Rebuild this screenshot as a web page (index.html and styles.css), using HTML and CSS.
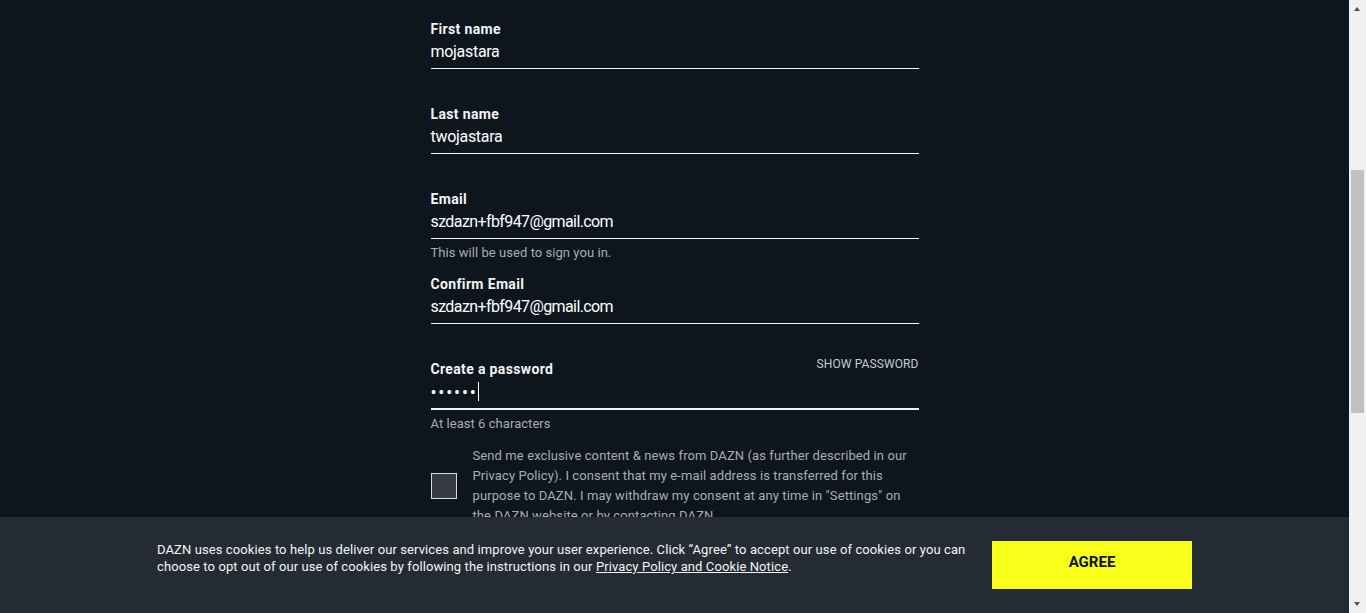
FILE: index.html
```html
<!DOCTYPE html>
<html lang="en">
<head>
<meta charset="utf-8">
<title>DAZN - Sign up</title>
<link rel="stylesheet" href="styles.css">
</head>
<body>
<div class="page">
  <form class="form">
    <div class="field">
      <label class="label">First name</label>
      <div class="input">mojastara</div>
    </div>
    <div class="field">
      <label class="label">Last name</label>
      <div class="input">twojastara</div>
    </div>
    <div class="field">
      <label class="label">Email</label>
      <div class="input input-mail">szdazn+fbf947@gmail.com</div>
      <div class="hint">This will be used to sign you in.</div>
    </div>
    <div class="field">
      <label class="label">Confirm Email</label>
      <div class="input input-mail">szdazn+fbf947@gmail.com</div>
    </div>
    <div class="field field-pw">
      <div class="label-row">
        <label class="label">Create a password</label>
        <span class="show">SHOW PASSWORD</span>
      </div>
      <div class="input input-focus"><span class="dots">••••••</span><span class="caret"></span></div>
      <div class="hint">At least 6 characters</div>
    </div>
    <div class="consent">
      <span class="checkbox"></span>
      <p class="consent-text">Send me exclusive content &amp; news from DAZN (as further described in our Privacy Policy). I consent that my e-mail address is transferred for this purpose to DAZN. I may withdraw my consent at any time in "Settings" on the DAZN website or by contacting DAZN.</p>
    </div>
  </form>
</div>

<div class="cookie">
  <div class="cookie-inner">
    <p class="cookie-text">DAZN uses cookies to help us deliver our services and improve your user experience. Click “Agree” to accept our use of cookies or you can choose to opt out of our use of cookies by following the instructions in our <a class="cookie-link">Privacy Policy and Cookie Notice</a>.</p>
    <button class="agree" type="button">AGREE</button>
  </div>
</div>

<div class="scrollbar">
  <span class="arrow arrow-up"></span>
  <span class="thumb"></span>
  <span class="arrow arrow-down"></span>
</div>
</body>
</html>
```
FILE: styles.css
```css
html, body {
  margin: 0;
  padding: 0;
  height: 100%;
}
body {
  background: #0d151d;
  color: #f3f4f5;
  font-family: Roboto, "Liberation Sans", Arial, sans-serif;
  overflow: hidden;
}
.page {
  width: calc(100% - 17px);
  height: 100%;
  overflow: hidden;
}
.form {
  width: 488px;
  margin: 0 auto;
  padding-top: 20px;
}
.field {
  height: 85px;
}
.label {
  display: block;
  font-size: 14px;
  line-height: 18px;
  font-weight: 700;
  color: #f3f4f5;
  letter-spacing: 0.35px;
}
.label-row {
  display: flex;
  justify-content: space-between;
  align-items: flex-start;
}
.show {
  font-size: 12px;
  line-height: 14px;
  margin-top: -3px;
  color: #c9cbcd;
  letter-spacing: 0.1px;
}
.input {
  height: 27px;
  padding-bottom: 3px;
  border-bottom: 1px solid #f3f4f5;
  font-size: 16px;
  line-height: 27px;
  color: #ffffff;
  letter-spacing: -0.3px;
  display: flex;
  align-items: center;
}
.input-mail {
  letter-spacing: -0.6px;
}
.input-focus {
  border-bottom-width: 2px;
}
.dots {
  font-size: 18px;
  letter-spacing: 1.8px;
  line-height: 20px;
  margin-top: 2px;
}
.caret {
  display: inline-block;
  width: 1px;
  height: 19px;
  background: #ffffff;
  margin-left: 0;
}
.hint {
  margin-top: 5px;
  font-size: 13px;
  line-height: 18px;
  color: #a9adb1;
  letter-spacing: 0.05px;
}
.field-pw {
  height: auto;
}
.consent {
  display: flex;
  align-items: center;
  gap: 16px;
  margin-top: 13px;
}
.checkbox {
  flex: none;
  width: 24px;
  height: 24px;
  background: #373c43;
  border: 1px solid #d6d8da;
}
.consent-text {
  margin: 0;
  max-width: 446px;
  font-size: 13px;
  line-height: 20px;
  color: #a9adb1;
  letter-spacing: 0.1px;
}
.cookie {
  position: fixed;
  left: 0;
  right: 17px;
  bottom: 0;
  height: 96px;
  background: #242b33;
}
.cookie-inner {
  width: 1035px;
  margin: 0 auto;
  padding-top: 24px;
  display: flex;
  align-items: flex-start;
  gap: 20px;
}
.cookie-text {
  flex: 1;
  margin: 0;
  font-size: 13px;
  line-height: 17px;
  color: #f3f4f5;
  letter-spacing: 0.1px;
}
.cookie-link {
  color: #f3f4f5;
  text-decoration: underline;
}
.agree {
  flex: none;
  width: 200px;
  height: 48px;
  border: 0;
  background: #f7ff1a;
  color: #0d151d;
  font-family: inherit;
  font-size: 15px;
  font-weight: 700;
  letter-spacing: 0;
  padding: 0 0 6px;
}
.scrollbar {
  position: fixed;
  top: 0;
  right: 0;
  width: 17px;
  height: 100%;
  background: #f1f1f1;
}
.thumb {
  position: absolute;
  left: 2px;
  top: 170px;
  width: 13px;
  height: 243px;
  background: #c1c1c1;
}
.arrow {
  position: absolute;
  left: 5px;
  width: 0;
  height: 0;
  border-left: 3.5px solid transparent;
  border-right: 3.5px solid transparent;
}
.arrow-up {
  top: 7px;
  border-bottom: 4px solid #505050;
}
.arrow-down {
  bottom: 7px;
  border-top: 4px solid #505050;
}
```
